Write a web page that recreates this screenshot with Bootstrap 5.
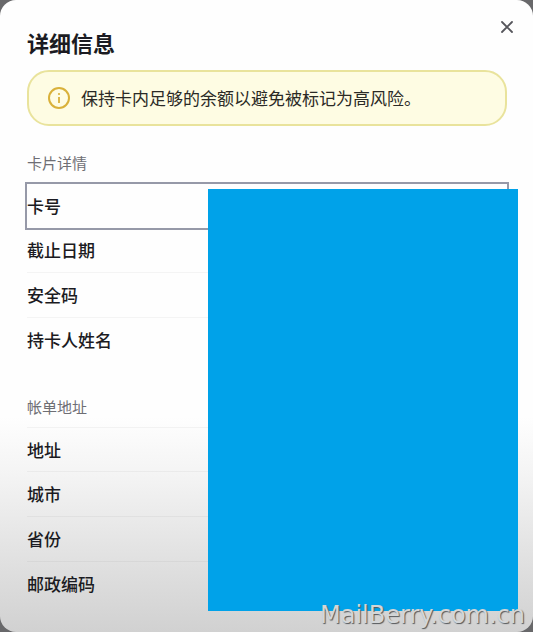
<!DOCTYPE html>
<html lang="zh-CN">
<head>
<meta charset="utf-8">
<meta name="viewport" content="width=device-width, initial-scale=1">
<title>详细信息</title>
<link href="https://cdn.jsdelivr.net/npm/bootstrap@5.3.0/dist/css/bootstrap.min.css" rel="stylesheet">
<style>
  body {
    background: #68686a;
    font-family: "Noto Sans CJK SC", sans-serif;
    color: #1b1b22;
  }
  .details-sheet {
    border-radius: 16px;
    padding: 25px 26px 24px 27px;
    background: linear-gradient(#fefefe 0, #fefefe 66%, #f4f4f4 75%, #e3e3e3 87%, #d1d1d1 100%);
  }
  .sheet-title { font-size: 22px; line-height: 34px; font-weight: 600; }
  .close-sheet { top: 16px; right: 15px; width: 22px; height: 22px; color: #56565c; }
  .notice {
    padding: 13px 18px;
    margin-top: 11px;
    border: 2px solid #e9e39c;
    border-radius: 22px;
    background: #fefce3;
    font-size: 17px;
    line-height: 26px;
    color: #2b2a26;
  }
  .notice svg { margin-right: 10px; }
  .group-label { font-size: 15px; line-height: 20px; color: #6e6e74; }
  .group-card { margin-top: 27px; }
  .group-card .group-label { margin-bottom: 11px; }
  .group-billing { margin-top: 35px; }
  .group-billing .group-label { margin-bottom: 10px; }
  .detail-row {
    height: 45px;
    font-size: 17px;
    line-height: 26px;
    font-weight: 500;
    color: #1b1b22;
    border-bottom: 1px solid rgba(0, 0, 0, .04);
  }
  .detail-row:last-child { height: 44px; border-bottom: 0; }
  .group-billing .detail-row:first-of-type { border-top: 1px solid rgba(0, 0, 0, .04); }
  .detail-focus { outline: 2px solid #9699a8; border-bottom: 0; height: 44px; }
  .value-mask { top: 189px; left: 208px; right: 15px; bottom: 21px; background: #00a2e9; }
  .site-mark {
    right: 8px;
    bottom: 3px;
    font-family: "DejaVu Sans", sans-serif;
    font-size: 24px;
    line-height: 28px;
    color: #d3d6d8;
    text-shadow: 1px 1px 1px #55585b;
  }
</style>
</head>
<body>
<main class="details-sheet position-relative min-vh-100">
  <h1 class="sheet-title m-0">详细信息</h1>
  <button type="button" class="close-sheet btn p-0 border-0 position-absolute d-flex align-items-center justify-content-center" aria-label="关闭">
    <svg width="12" height="12" viewBox="0 0 12 12" fill="none" stroke="currentColor" stroke-width="1.8" stroke-linecap="round" aria-hidden="true"><path d="M1 1l10 10M11 1L1 11"/></svg>
  </button>

  <div class="notice d-flex align-items-center" role="note">
    <svg class="flex-shrink-0" width="24" height="24" viewBox="0 0 24 24" fill="none" stroke="#d9b13a" aria-hidden="true">
      <circle cx="12" cy="12" r="10" stroke-width="2"/>
      <path d="M12 11v6" stroke-width="1.8"/>
      <circle cx="12" cy="8" r="1.1" fill="#d9b13a" stroke="none"/>
    </svg>
    <span>保持卡内足够的余额以避免被标记为高风险。</span>
  </div>

  <section class="group-card">
    <h2 class="group-label mt-0 fw-normal">卡片详情</h2>
    <button type="button" class="detail-row detail-focus btn rounded-0 p-0 border-0 w-100 d-flex align-items-center">卡号</button>
    <div class="detail-row d-flex align-items-center">截止日期</div>
    <div class="detail-row d-flex align-items-center">安全码</div>
    <div class="detail-row d-flex align-items-center">持卡人姓名</div>
  </section>

  <section class="group-billing">
    <h2 class="group-label mt-0 fw-normal">帐单地址</h2>
    <div class="detail-row d-flex align-items-center">地址</div>
    <div class="detail-row d-flex align-items-center">城市</div>
    <div class="detail-row d-flex align-items-center">省份</div>
    <div class="detail-row d-flex align-items-center">邮政编码</div>
  </section>

  <div class="value-mask position-absolute"></div>
  <div class="site-mark position-absolute">MailBerry.com.cn</div>
</main>
<script src="https://cdn.jsdelivr.net/npm/bootstrap@5.3.0/dist/js/bootstrap.bundle.min.js"></script>
</body>
</html>
